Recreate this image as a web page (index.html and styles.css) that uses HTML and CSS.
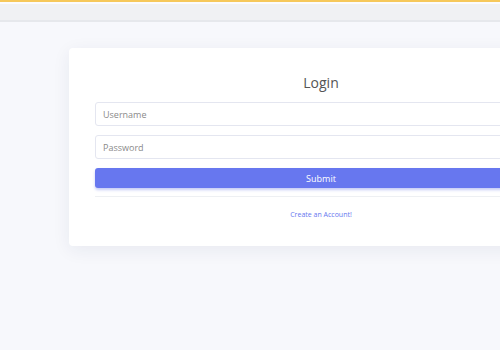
FILE: index.html
```html
<!DOCTYPE html>
<html lang="en">

<head>
  <meta charset="UTF-8">
  <meta name="viewport" content="width=device-width, initial-scale=1.0">
  <title>Login</title>

  <!-- styles -->
  <link rel="stylesheet" href="styles.css">
</head>

<body>
  <div class="topbar"></div>

  <main class="page">
    <div class="card">
      <h2>Login</h2>
      <form class="login-form">
        <input type="text" placeholder="Username">
        <input type="password" placeholder="Password">
        <button type="submit">Submit</button>
      </form>
      <hr>
      <div class="register">
        <a href="#">Create an Account!</a>
      </div>
    </div>
  </main>
</body>

</html>
```

FILE: styles.css
```css
* {
  margin: 0;
  padding: 0;
  box-sizing: border-box;
  outline: none;
  font-family: "Open Sans", "Liberation Sans", sans-serif;
}

body {
  min-height: 100vh;
  overflow: hidden;
  background-color: #f7f8fc;
}

.topbar {
  height: 22px;
  border-top: 2px solid #f6c85a;
  border-bottom: 2px solid #e6e8ec;
  background: linear-gradient(#fbfbfc 0, #fbfbfc 2px, #f0f1f3 2px);
}

.page {
  padding: 26px 0 0 69px;
}

.card {
  width: 504px;
  padding: 25px 26px 26px;
  border-radius: 4px;
  background-color: #fff;
  box-shadow: 0 4px 18px rgba(30, 40, 90, 0.07);
}

.card h2 {
  font-size: 14px;
  font-weight: 400;
  line-height: 20px;
  text-align: center;
  color: #555;
  margin-bottom: 9px;
}

.login-form {
  display: flex;
  flex-direction: column;
  gap: 9px;
}

.login-form input {
  height: 24px;
  padding: 0 7px;
  border: 1px solid #e4e6f0;
  border-radius: 3px;
  background-color: #fff;
  font-size: 9px;
  color: #555;
}

.login-form input::placeholder {
  color: #8a8a8a;
}

.login-form button {
  height: 20px;
  border: none;
  border-radius: 3px;
  background-color: #6777ef;
  box-shadow: 0 2px 3px #c6cbf6;
  color: #fff;
  font-size: 9px;
  cursor: pointer;
}

.card hr {
  border: none;
  border-top: 1px solid #eef0f3;
  margin-top: 8px;
}

.register {
  margin-top: 9px;
  text-align: center;
  line-height: 10px;
}

.register a {
  font-size: 7px;
  color: #6777ef;
  text-decoration: none;
}
```
